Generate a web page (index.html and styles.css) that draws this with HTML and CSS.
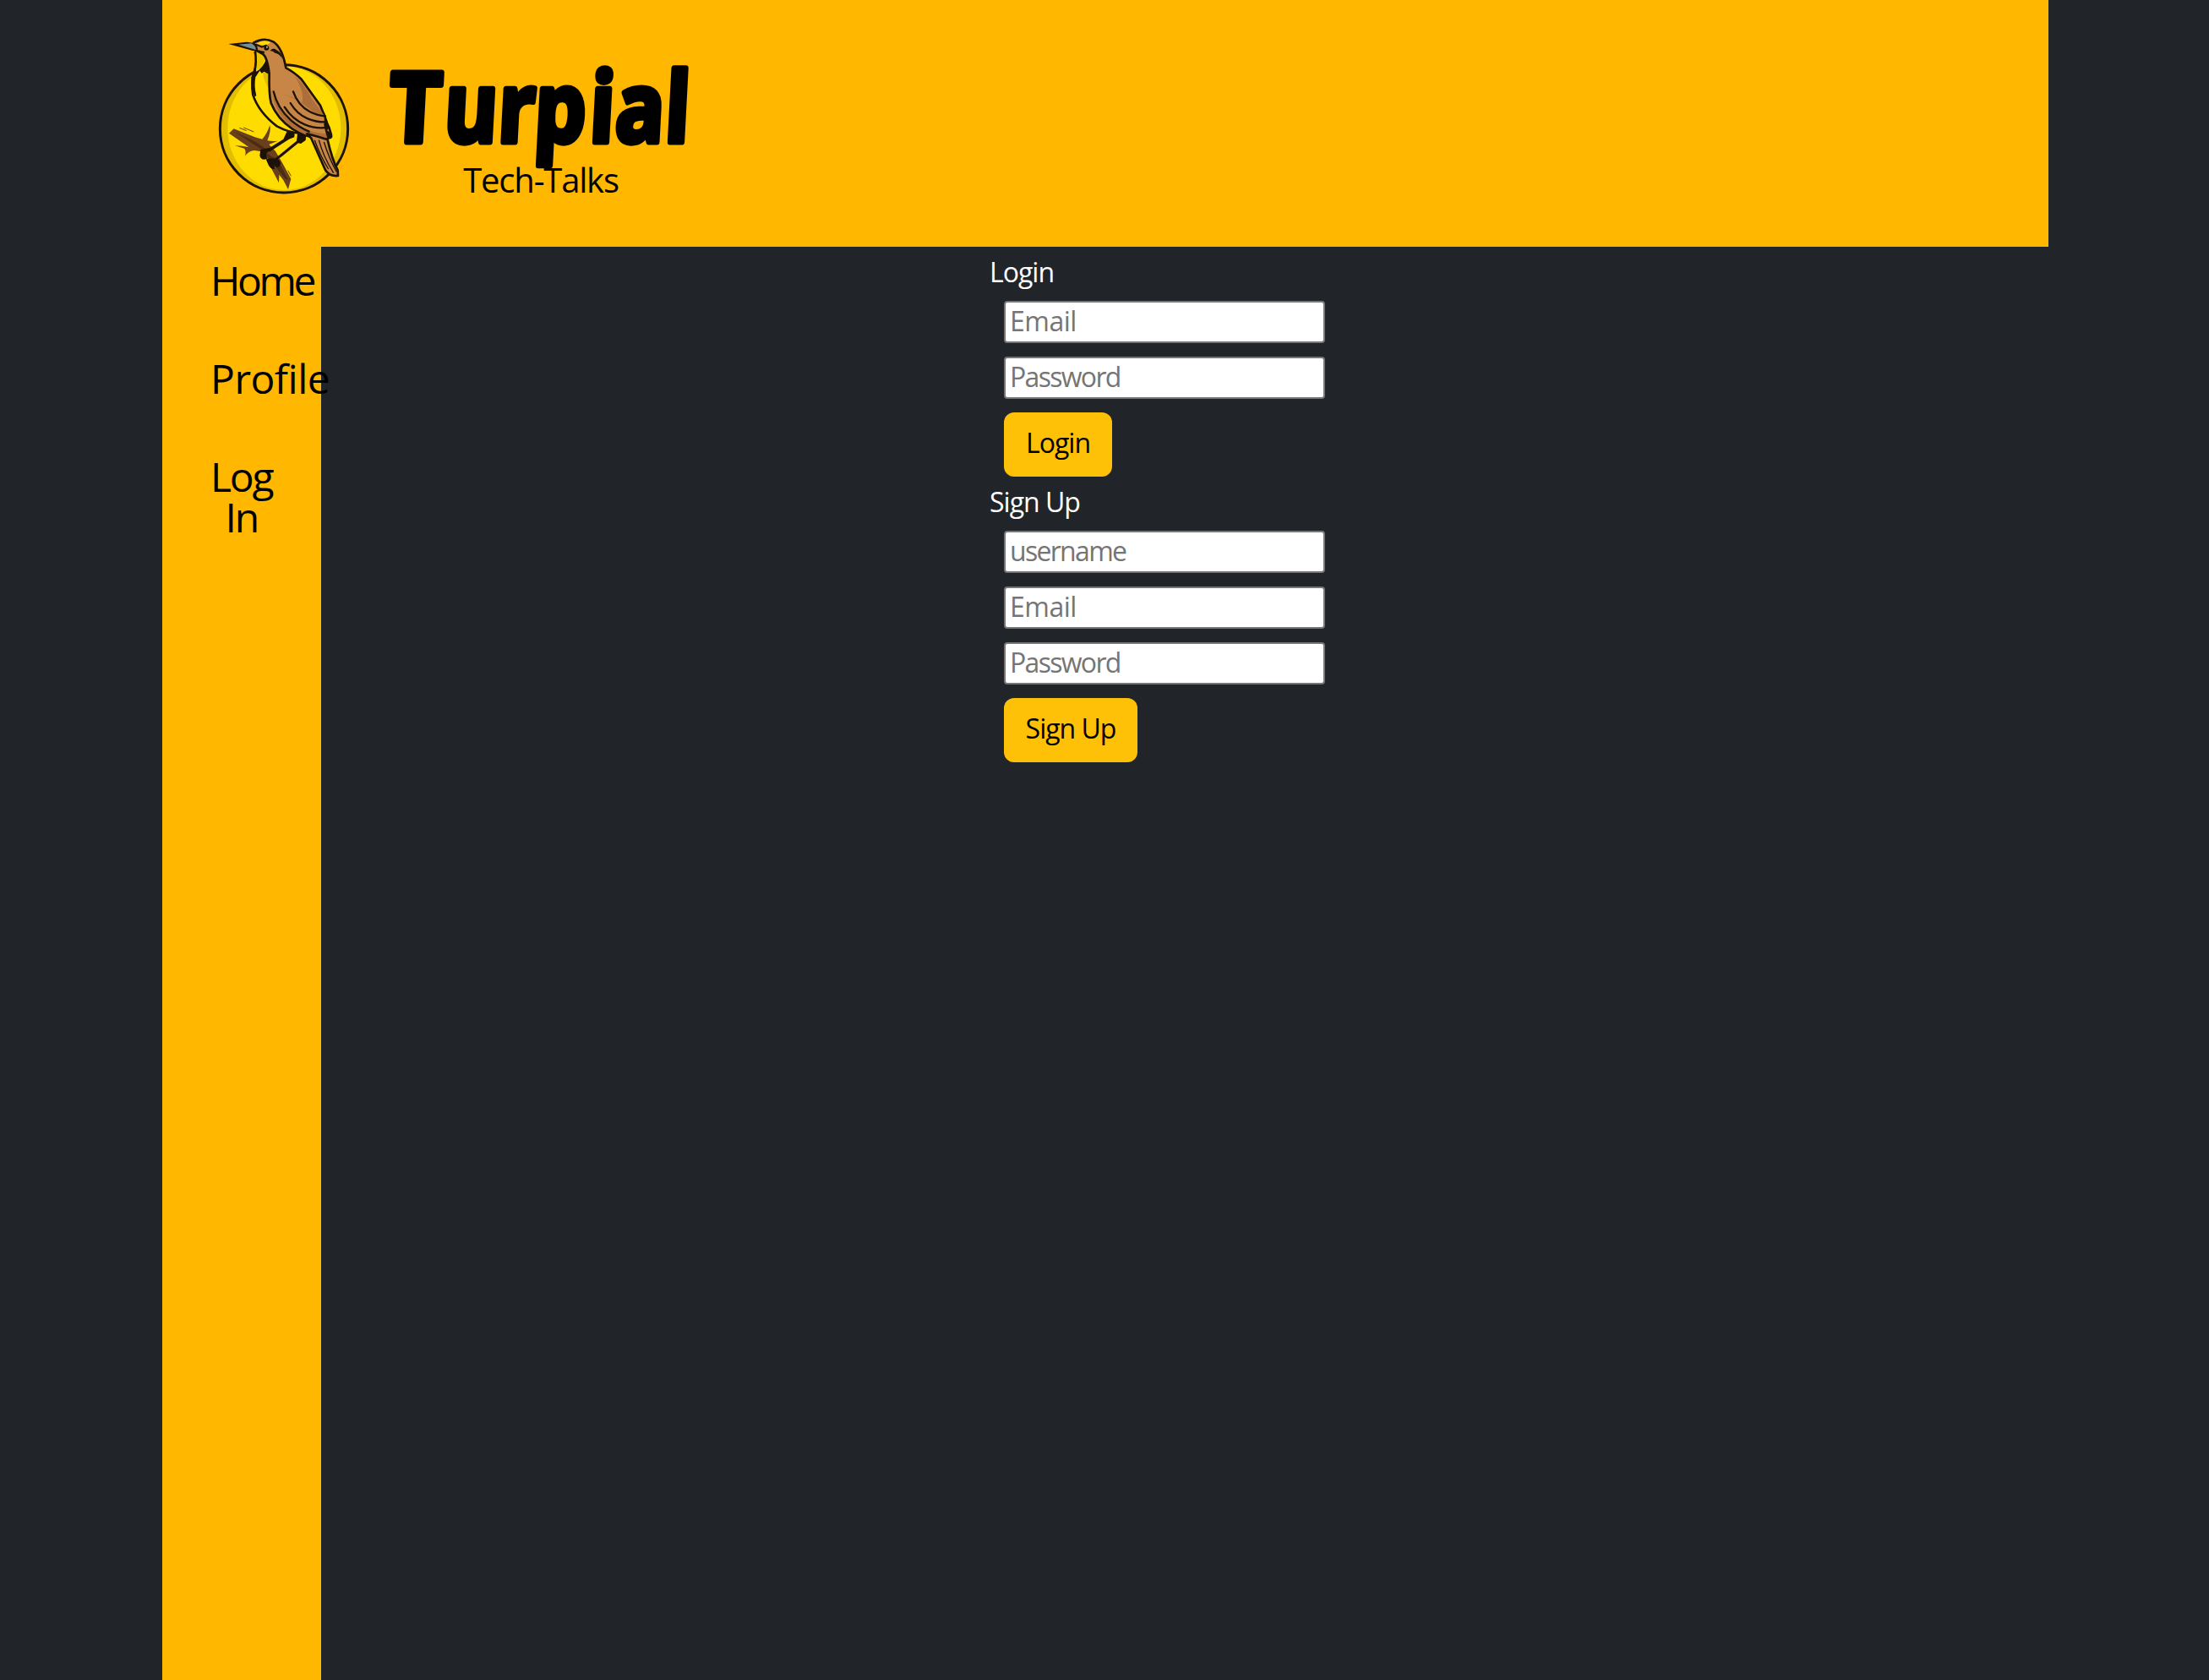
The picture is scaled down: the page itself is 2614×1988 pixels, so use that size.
FILE: index.html
```html
<!DOCTYPE html>
<html lang="en">
<head>
<meta charset="utf-8">
<title>Turpial Tech-Talks</title>
<link rel="stylesheet" href="styles.css">
</head>
<body>
<div class="page">
  <header class="header">
    <svg class="bird" viewBox="0 0 600 630" aria-label="Turpial bird">
      <circle cx="288" cy="367" r="227" fill="#e3bd00"/>
      <ellipse cx="289" cy="365" rx="201" ry="220" fill="#ffdc00"/>
      <circle cx="288" cy="367" r="227" fill="none" stroke="#1c1208" stroke-width="9"/>
      <path d="M110 367L185 397L211 404Q228 385 238 354Q243 376 229 409Q246 412 266 410L235 423L258 447L284 491L313 545L303 582L286 550L271 530L270 559L246 513L224 474L203 447L183 444Q164 444 150 464Q155 445 147 437L114 427Q138 427 163 432L93 383Z" fill="#69401c"/>
      <path d="M110 376L189 415L238 448L278 500L304 550L292 544L246 488L209 441Z" fill="#4c2b11"/>
      <path d="M130 364L155 374M145 363L181 378M302 515L313 535" stroke="#69401c" stroke-width="3" fill="none"/>
      <path d="M188 92Q191 133 183 163Q170 200 178 247Q199 309 263 358Q308 382 347 383L246 253L226 105Z" fill="#ffdc00" stroke="#1c1208" stroke-width="8" stroke-linejoin="round"/>
      <path d="M214 169Q214 197 238 229L232 160Z" fill="#dfbd00"/>
      <path d="M181 93Q190 130 181 163L172 184Q170 222 184 253L190 250Q181 215 187 184L202 161L209 170L218 164L231 172L236 163L225 121Q211 155 189 164Q194 123 187 93Z" fill="#1c1208"/>
      <path d="M190 91Q194 131 190 160Q211 151 221 119L209 101Z" fill="#e9c600"/>
      <path d="M180 62Q216 41 250 58Q282 78 295 151Q323 165 350 191L417 284L433 323L440 344L449 365L456 389Q460 402 441 401Q376 405 318 368Q264 331 242 276Q234 241 236 171Q229 115 214 102L188 88Z" fill="#c88646" stroke="#1c1208" stroke-width="8" stroke-linejoin="round"/>
      <path d="M326 180Q362 210 389 264L419 303L433 324Q405 320 373 292Q324 254 276 242Q319 251 352 275Q362 236 326 180Z" fill="#ad6e39"/>
      <path d="M246 242Q270 310 323 346Q376 384 453 386L444 399Q365 405 300 347Q257 304 246 242Z" fill="#ad6e39"/>
      <path d="M321 235Q337 283 379 306Q408 321 435 322M311 276Q335 316 372 331Q407 345 440 343M290 290Q318 334 362 352Q401 369 448 362M251 235Q264 294 313 337Q341 361 377 377" fill="none" stroke="#1c1208" stroke-width="7" stroke-linecap="round"/>
      <path d="M433 308L434 321L441 344L450 362L441 373L458 385L455 402L442 400L436 380L430 354Z" fill="#1c1208"/>
      <path d="M370 385L385 401L435 514Q450 537 480 534L479 514Q460 480 443 406L409 395Z" fill="#c88646" stroke="#1c1208" stroke-width="8" stroke-linejoin="round"/>
      <path d="M412 407Q427 465 464 524M430 414Q448 472 475 520M397 407Q415 460 446 510" fill="none" stroke="#1c1208" stroke-width="4"/>
      <path d="M91 66L156 59Q174 59 192 68L196 91L177 90Z" fill="#1c1208"/>
      <path d="M126 68L172 64Q190 74 188 87L171 82Z" fill="#778e97"/>
      <path d="M190 65Q217 48 241 60Q224 75 209 70Z" fill="#ffdc00"/>
      <path d="M187 67L210 77Q219 73 227 70M196 91L219 96" fill="none" stroke="#1c1208" stroke-width="6"/>
      <circle cx="226" cy="80" r="9" fill="#1c1208"/>
      <circle cx="228" cy="77" r="3" fill="#d8c6a6"/>
      <path d="M238 91Q250 76 262 88Q278 95 282 117Q268 98 256 98Q249 90 238 91Z" fill="#1c1208"/>
      <path d="M298 378L326 380L325 397L306 404L248 442L225 456L228 474Q207 482 202 463L205 441Q228 437 238 434L286 404ZM336 384L367 389L365 408L348 420L339 418L282 464L267 475Q283 490 271 501Q260 509 253 495L255 510Q241 512 233 496L225 477Q236 469 255 474L333 410Z" fill="#1c1208"/>
      <path d="M226 453Q235 444 252 448L266 463Q258 474 243 464Z" fill="#69401c"/>
    </svg>
    <div class="brand">
      <svg class="wordmark" viewBox="0 0 380 150" role="img" aria-label="Turpial">
        <g transform="translate(0 117.5) skewX(-3)">
          <text class="wordmark-text" transform="scale(.93 1)" x="20" y="0">T</text>
          <text class="wordmark-text" transform="scale(.84 1)" x="100 176 227 305 341 411" y="0">urpial</text>
        </g>
      </svg>
      <span class="tagline">Tech-Talks</span>
    </div>
  </header>
  <div class="content">
    <nav class="sidebar">
      <a class="nav-link home">Home</a>
      <a class="nav-link profile">Profile</a>
      <a class="nav-link login">Log<br>In</a>
    </nav>
    <main class="main">
      <form class="form">
        <label class="title">Login</label>
        <input class="field" type="text" placeholder="Email">
        <input class="field long" type="text" placeholder="Password">
        <button class="button" type="button">Login</button>
      </form>
      <form class="form">
        <label class="title">Sign Up</label>
        <input class="field long" type="text" placeholder="username">
        <input class="field" type="text" placeholder="Email">
        <input class="field long" type="text" placeholder="Password">
        <button class="button wide" type="button">Sign Up</button>
      </form>
    </main>
  </div>
</div>
</body>
</html>
```
FILE: styles.css
```css
* { box-sizing: border-box; }

body {
  margin: 0;
  background: #212529;
  color: #000;
  font: 32px/48px "Trebuchet MS", "Open Sans", sans-serif;
  letter-spacing: -1px;
}

.page {
  display: flex;
  flex-direction: column;
  width: 2232px;
  height: 1988px;
  margin-left: 192px;
}

.header {
  display: flex;
  flex: none;
  height: 292px;
  padding: 30px 0 0 48px;
  background: #ffb700;
}

.bird { width: 200px; height: 210px; }

.brand {
  display: flex;
  flex-direction: column;
  align-items: center;
  width: 400px;
  padding-top: 20px;
}

.wordmark {
  width: 380px;
  height: 150px;
  margin-right: 20px;
  flex: none;
  overflow: visible;
}

.wordmark-text {
  font: 700 115px "Open Sans", sans-serif;
  letter-spacing: 0;
  fill: #000;
  stroke: #000;
  stroke-width: 7px;
  stroke-linejoin: round;
}

.tagline {
  margin-top: -11px;
  font-size: 40px;
  line-height: 48px;
  letter-spacing: -1.2px;
}

.content { display: flex; flex: 1; }

.sidebar {
  display: flex;
  flex-direction: column;
  align-items: flex-start;
  gap: 68px;
  width: 188px;
  padding: 16px 0 0 57px;
  background: #ffb700;
  font-size: 48px;
}

.nav-link { text-align: center; white-space: nowrap; }
.home { letter-spacing: -3.4px; }
.profile { letter-spacing: -0.5px; font-variant-ligatures: none; }
.login { letter-spacing: -2.2px; }

.main {
  display: flex;
  flex-direction: column;
  gap: 8px;
  padding: 6px 0 0 791px;
}

.form {
  display: flex;
  flex-direction: column;
  align-items: flex-start;
  gap: 16px;
  width: 412px;
  padding-left: 17px;
}

.title {
  margin: 0 0 -6px -17px;
  color: #fff;
}

.form + .form .title { margin-top: -2px; }

.field {
  width: 380px;
  height: 50px;
  padding: 0 5px 4px;
  border: 2px solid #767676;
  border-radius: 4px;
  background: #fff;
  font: inherit;
  line-height: 42px;
  letter-spacing: -0.5px;
}

.field.long { letter-spacing: -1.7px; }

.field::placeholder { color: #757575; opacity: 1; }

.button {
  width: 128px;
  height: 76px;
  padding: 0 0 4px;
  border: 0;
  border-radius: 12px;
  background: #ffc107;
  color: #000;
  font: inherit;
  letter-spacing: inherit;
}

.button.wide { width: 158px; }
```
